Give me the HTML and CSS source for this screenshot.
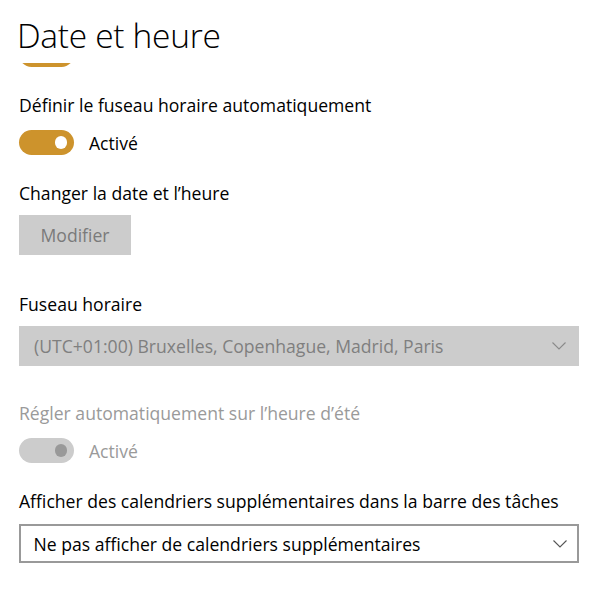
FILE: index.html
```html
<!DOCTYPE html>
<html lang="fr">
<head>
<meta charset="utf-8">
<title>Date et heure</title>
<link rel="stylesheet" href="styles.css">
</head>
<body>
<div class="page">
  <header class="header">
    <h1 class="title">Date et heure</h1>
  </header>
  <div class="viewport">
    <div class="content">
      <div class="toggle-row first">
        <span class="toggle on"><span class="knob"></span></span>
      </div>

      <div class="label l1">Définir le fuseau horaire automatiquement</div>
      <div class="toggle-row t1">
        <span class="toggle on"><span class="knob"></span></span>
        <span class="toggle-text">Activé</span>
      </div>

      <div class="label l2">Changer la date et l’heure</div>
      <button class="btn" disabled>Modifier</button>

      <div class="label l3">Fuseau horaire</div>
      <div class="select disabled">
        <span class="select-text">(UTC+01:00) Bruxelles, Copenhague, Madrid, Paris</span>
        <svg class="chev" width="14" height="8" viewBox="0 0 14 8"><path d="M0.5 0.5 L7 7 L13.5 0.5" fill="none" stroke="currentColor" stroke-width="1.1"/></svg>
      </div>

      <div class="label l4 muted">Régler automatiquement sur l’heure d’été</div>
      <div class="toggle-row t2">
        <span class="toggle off"><span class="knob"></span></span>
        <span class="toggle-text muted">Activé</span>
      </div>

      <div class="label l5">Afficher des calendriers supplémentaires dans la barre des tâches</div>
      <div class="select active">
        <span class="select-text">Ne pas afficher de calendriers supplémentaires</span>
        <svg class="chev" width="14" height="8" viewBox="0 0 14 8"><path d="M0.5 0.5 L7 7 L13.5 0.5" fill="none" stroke="currentColor" stroke-width="1.1"/></svg>
      </div>
    </div>
  </div>
</div>
</body>
</html>
```

FILE: styles.css
```css
html, body {
  margin: 0;
  padding: 0;
  background: #ffffff;
}
body {
  font-family: "Open Sans", "Noto Sans", sans-serif;
  color: #000000;
  width: 605px;
  height: 595px;
  overflow: hidden;
}
.page {
  display: flex;
  flex-direction: column;
  height: 595px;
}
.header {
  height: 63px;
  flex: none;
  position: relative;
  z-index: 1;
  background: #ffffff;
}
.title {
  margin: 0;
  padding: 12px 0 0 17px;
  font-size: 33.5px;
  font-weight: 300;
  line-height: 46px;
  letter-spacing: -0.3px;
}
.viewport {
  flex: 1;
  overflow: hidden;
}
.content {
  margin-top: -21px;
  padding-left: 19px;
  padding-right: 26px;
  display: flex;
  flex-direction: column;
  align-items: flex-start;
}
.label {
  font-size: 17.6px;
  line-height: 25px;
}
.muted { color: #9a9a9a; }
.toggle-row {
  display: flex;
  align-items: center;
  gap: 15px;
  height: 25px;
}
.toggle {
  width: 55px;
  height: 25px;
  border-radius: 13px;
  display: flex;
  align-items: center;
  justify-content: flex-end;
  padding-right: 7px;
  box-sizing: border-box;
}
.toggle.on { background: #cd932c; }
.toggle.off { background: #cccccc; }
.knob {
  width: 12.5px;
  height: 12.5px;
  border-radius: 50%;
}
.toggle.on .knob { background: #ffffff; }
.toggle.off .knob { background: #999999; }
.toggle-text {
  font-size: 17.6px;
}
.l1 { margin-top: 26px; }
.t1 { margin-top: 12px; }
.l2 { margin-top: 26px; }
.btn {
  margin-top: 9px;
  width: 112px;
  height: 40px;
  border: none;
  background: #cccccc;
  color: #7a7a7a;
  font-family: inherit;
  font-size: 17.6px;
  padding: 0;
}
.l3 { margin-top: 37px; }
.select {
  align-self: stretch;
  height: 40px;
  box-sizing: border-box;
  display: flex;
  align-items: center;
  justify-content: space-between;
  padding: 0 13px 0 15px;
  font-size: 17.6px;
  margin-top: 9px;
}
.select.disabled {
  background: #cccccc;
  color: #7f7f7f;
}
.select.disabled .chev { color: #8a8a8a; }
.select.active {
  border: 2.5px solid #999999;
  padding: 0 10.5px 0 12.5px;
  color: #000000;
  height: 39px;
  margin-top: 10px;
}
.select.active .chev { color: #555555; }
.l4 { margin-top: 35px; }
.t2 { margin-top: 12px; }
.l5 { margin-top: 26px; }
```
